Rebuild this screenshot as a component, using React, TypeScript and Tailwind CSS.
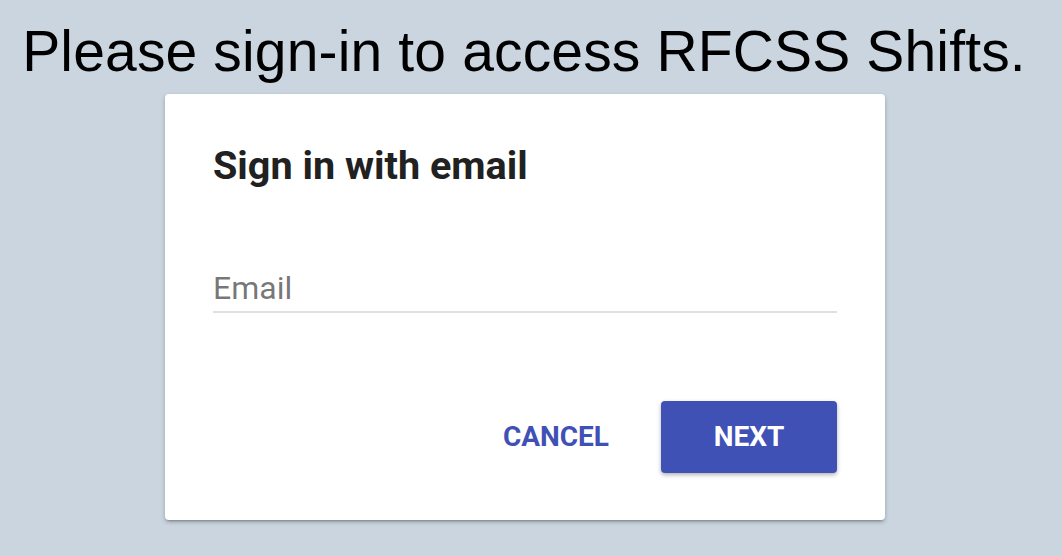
import React from 'react';

export default function App() {
  return (
    <div className="min-h-screen w-full bg-[#cad5e0]">
      <div className="w-[1048px] flex flex-col items-center pt-[19px]">
        <h1 className="text-[57px] leading-[64px] tracking-[0.15px] text-black whitespace-nowrap font-['Liberation_Sans',Arial,sans-serif]">
          Please sign-in to access RFCSS Shifts.
        </h1>

        <div className="mt-[11px] ml-[2px] w-[720px] bg-white rounded-[4px] shadow-[0_2px_4px_rgba(0,0,0,0.25),0_3px_2px_-2px_rgba(0,0,0,0.2)] px-[48px] pt-[48px] pb-[47px] font-['Roboto',sans-serif]">
          <h2 className="text-[39.6px] leading-[48px] font-bold text-[#212121]">Sign in with email</h2>

          <div className="mt-[78px] border-b-2 border-[#e0e0e0] pb-[3px]">
            <label className="block text-[32px] leading-[40px] text-black/55">Email</label>
          </div>

          <div className="mt-[88px] flex justify-end items-center gap-[20px]">
            <button className="h-[72px] px-8 text-[28px] font-bold text-[#3f51b5] uppercase">
              Cancel
            </button>
            <button className="h-[72px] w-[176px] rounded-[4px] bg-[#3f51b5] text-white text-[28px] font-bold uppercase shadow-[0_2px_4px_rgba(0,0,0,0.3)]">
              Next
            </button>
          </div>
        </div>
      </div>
    </div>
  );
}
